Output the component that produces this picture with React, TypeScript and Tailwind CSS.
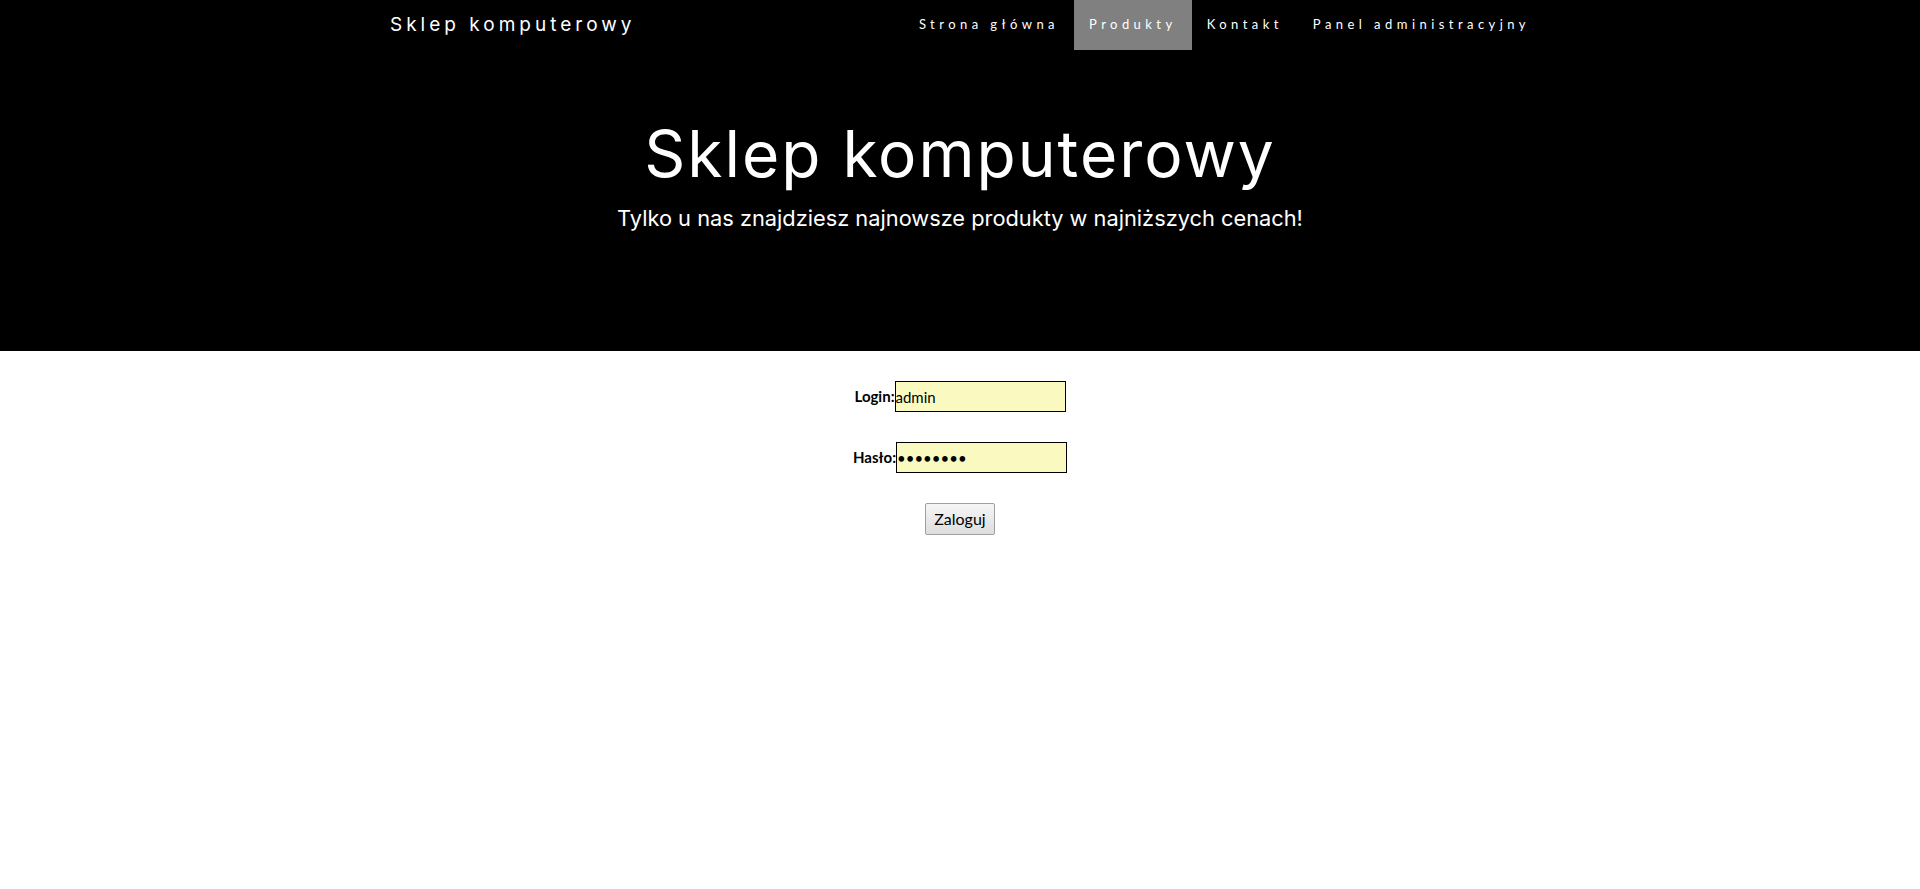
import React from 'react'

const navLinks = [
  { id: 0, name: 'Strona główna', active: false },
  { id: 1, name: 'Produkty', active: true },
  { id: 2, name: 'Kontakt', active: false },
  { id: 3, name: 'Panel administracyjny', active: false },
]

const App = () => {
  return (
    <div className="min-h-[889px] bg-white">
      <nav className="bg-black h-[50px]">
        <div className="w-[1170px] mx-auto px-[15px] flex justify-between h-full">
          <a className="flex items-center text-white text-[19px] tracking-[4px] font-['Inter',sans-serif]">
            Sklep komputerowy
          </a>
          <ul className="flex h-full -mr-[15px] font-['Lato',sans-serif]">
            {navLinks.map((link) => (
              <li
                key={link.id}
                className={`flex items-center px-[15px] h-full text-white text-[13px] tracking-[4.45px] ${
                  link.active ? 'bg-[#808080]' : ''
                }`}
              >
                {link.name}
              </li>
            ))}
          </ul>
        </div>
      </nav>
      <header className="bg-black h-[301px] text-white text-center font-['Inter',sans-serif]">
        <h1 className="pt-[66px] text-[64px] leading-[1.2] tracking-[2px]">Sklep komputerowy</h1>
        <p className="text-[21.8px] leading-[1.5] mt-[9px]">
          Tylko u nas znajdziesz najnowsze produkty w najniższych cenach!
        </p>
      </header>
      <form className="pt-[30px] text-center text-[15px] text-black font-['Lato',sans-serif]">
        <div className="flex justify-center items-center h-[31px]">
          <label htmlFor="login" className="font-bold">
            Login:
          </label>
          <input
            id="login"
            type="text"
            defaultValue="admin"
            className="w-[171px] h-[31px] bg-[#fafac0] border border-black outline-none text-[15px]"
          />
        </div>
        <div className="flex justify-center items-center h-[31px] mt-[30px]">
          <label htmlFor="haslo" className="font-bold">
            Hasło:
          </label>
          <input
            id="haslo"
            type="password"
            defaultValue="password"
            className="w-[171px] h-[31px] bg-[#fafac0] border border-black outline-none text-[15px]"
          />
        </div>
        <div className="mt-[30px]">
          <button
            type="submit"
            className="h-[32px] px-[8px] border border-[#a0a0a0] rounded-[2px] bg-gradient-to-b from-[#f6f6f6] to-[#dedede] text-[16px]"
          >
            Zaloguj
          </button>
        </div>
      </form>
    </div>
  )
}

export default App
